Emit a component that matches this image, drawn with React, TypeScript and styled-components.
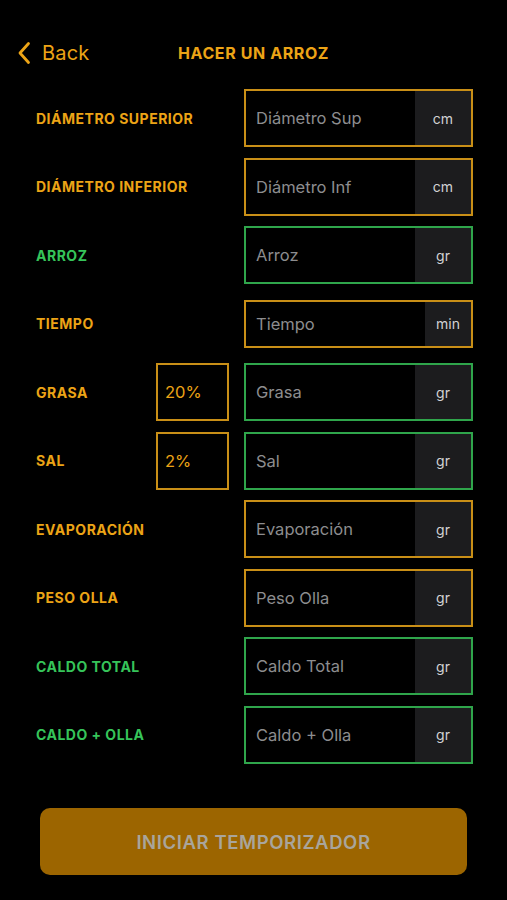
import React from "react";
import styled, { createGlobalStyle } from "styled-components";

const ORANGE = "#eca416";
const ORANGE_BORDER = "#c98f17";
const GREEN = "#36c45a";
const GREEN_BORDER = "#2fa54b";

const Global = createGlobalStyle`
  html, body { margin: 0; padding: 0; background: #000; }
  body { font-family: Inter, "Noto Sans", "Liberation Sans", sans-serif; -webkit-font-smoothing: antialiased; }
`;

const Page = styled.div`
  width: 507px;
  min-height: 900px;
  background: #000;
  padding-top: 33px;
  box-sizing: border-box;
`;

const Header = styled.div`
  position: relative;
  height: 40px;
  display: flex;
  align-items: center;
  justify-content: center;
`;

const BackButton = styled.div`
  position: absolute;
  left: 17px;
  top: 0;
  height: 40px;
  display: flex;
  align-items: center;
  gap: 11px;
  color: ${ORANGE};
  font-size: 20px;
  font-weight: 400;
  letter-spacing: 0.2px;
`;

const Title = styled.div`
  color: ${ORANGE};
  font-size: 16px;
  font-weight: 700;
  letter-spacing: 0.6px;
`;

const Form = styled.div`
  margin-top: 16px;
  padding-left: 36px;
  display: flex;
  flex-direction: column;
  gap: 10.5px;
`;

const Row = styled.div`
  display: grid;
  grid-template-columns: 105px 73px 229px;
  column-gap: 15px;
  height: 58px;
  align-items: center;
`;

const Label = styled.div<{ $green?: boolean; $span: boolean }>`
  grid-column: ${(p) => (p.$span ? "1 / span 2" : "1")};
  color: ${(p) => (p.$green ? GREEN : ORANGE)};
  font-size: 14px;
  font-weight: 700;
  letter-spacing: 0.5px;
  white-space: nowrap;
`;

const Percent = styled.div`
  grid-column: 2;
  height: 58px;
  box-sizing: border-box;
  border: 2px solid ${ORANGE_BORDER};
  display: flex;
  align-items: center;
  padding-left: 7px;
  color: ${ORANGE};
  font-size: 16.5px;
`;

const Field = styled.div<{ $green?: boolean; $short?: boolean }>`
  grid-column: 3;
  height: ${(p) => (p.$short ? 48 : 58)}px;
  box-sizing: border-box;
  border: 2px solid ${(p) => (p.$green ? GREEN_BORDER : ORANGE_BORDER)};
  display: flex;
  align-items: stretch;
  overflow: hidden;
`;

const Placeholder = styled.div`
  flex: 1;
  display: flex;
  align-items: center;
  padding-left: 10px;
  color: #8d8d8f;
  font-size: 16.5px;
`;

const Unit = styled.div<{ $short?: boolean }>`
  width: ${(p) => (p.$short ? 46 : 56)}px;
  background: #1c1c1e;
  display: flex;
  align-items: center;
  justify-content: center;
  color: #d2d2d4;
  font-size: 14px;
`;

const StartButton = styled.div`
  margin: 44.5px 40px 0;
  height: 67px;
  border-radius: 10px;
  background: #9c6500;
  display: flex;
  align-items: center;
  justify-content: center;
  color: #a9a59c;
  font-size: 18.5px;
  font-weight: 600;
  letter-spacing: 0.6px;
`;

type RowData = {
  label: string;
  placeholder: string;
  unit: string;
  green?: boolean;
  labelGreen?: boolean;
  percent?: string;
  short?: boolean;
};

const rows: RowData[] = [
  { label: "DIÁMETRO SUPERIOR", placeholder: "Diámetro Sup", unit: "cm" },
  { label: "DIÁMETRO INFERIOR", placeholder: "Diámetro Inf", unit: "cm" },
  { label: "ARROZ", placeholder: "Arroz", unit: "gr", green: true, labelGreen: true },
  { label: "TIEMPO", placeholder: "Tiempo", unit: "min", short: true },
  { label: "GRASA", placeholder: "Grasa", unit: "gr", green: true, percent: "20%" },
  { label: "SAL", placeholder: "Sal", unit: "gr", green: true, percent: "2%" },
  { label: "EVAPORACIÓN", placeholder: "Evaporación", unit: "gr" },
  { label: "PESO OLLA", placeholder: "Peso Olla", unit: "gr" },
  { label: "CALDO TOTAL", placeholder: "Caldo Total", unit: "gr", green: true, labelGreen: true },
  { label: "CALDO + OLLA", placeholder: "Caldo + Olla", unit: "gr", green: true, labelGreen: true },
];

export default function App() {
  return (
    <Page>
      <Global />
      <Header>
        <BackButton>
          <svg width="14" height="24" viewBox="0 0 14 24" fill="none">
            <path d="M11.5 2.5 L3 12 L11.5 21.5" stroke={ORANGE} strokeWidth="2.8" strokeLinecap="round" strokeLinejoin="round" />
          </svg>
          <span>Back</span>
        </BackButton>
        <Title>HACER UN ARROZ</Title>
      </Header>
      <Form>
        {rows.map((r) => (
          <Row key={r.label}>
            <Label $green={r.labelGreen} $span={!r.percent}>
              {r.label}
            </Label>
            {r.percent && <Percent>{r.percent}</Percent>}
            <Field $green={r.green} $short={r.short}>
              <Placeholder>{r.placeholder}</Placeholder>
              <Unit $short={r.short}>{r.unit}</Unit>
            </Field>
          </Row>
        ))}
      </Form>
      <StartButton>INICIAR TEMPORIZADOR</StartButton>
    </Page>
  );
}
